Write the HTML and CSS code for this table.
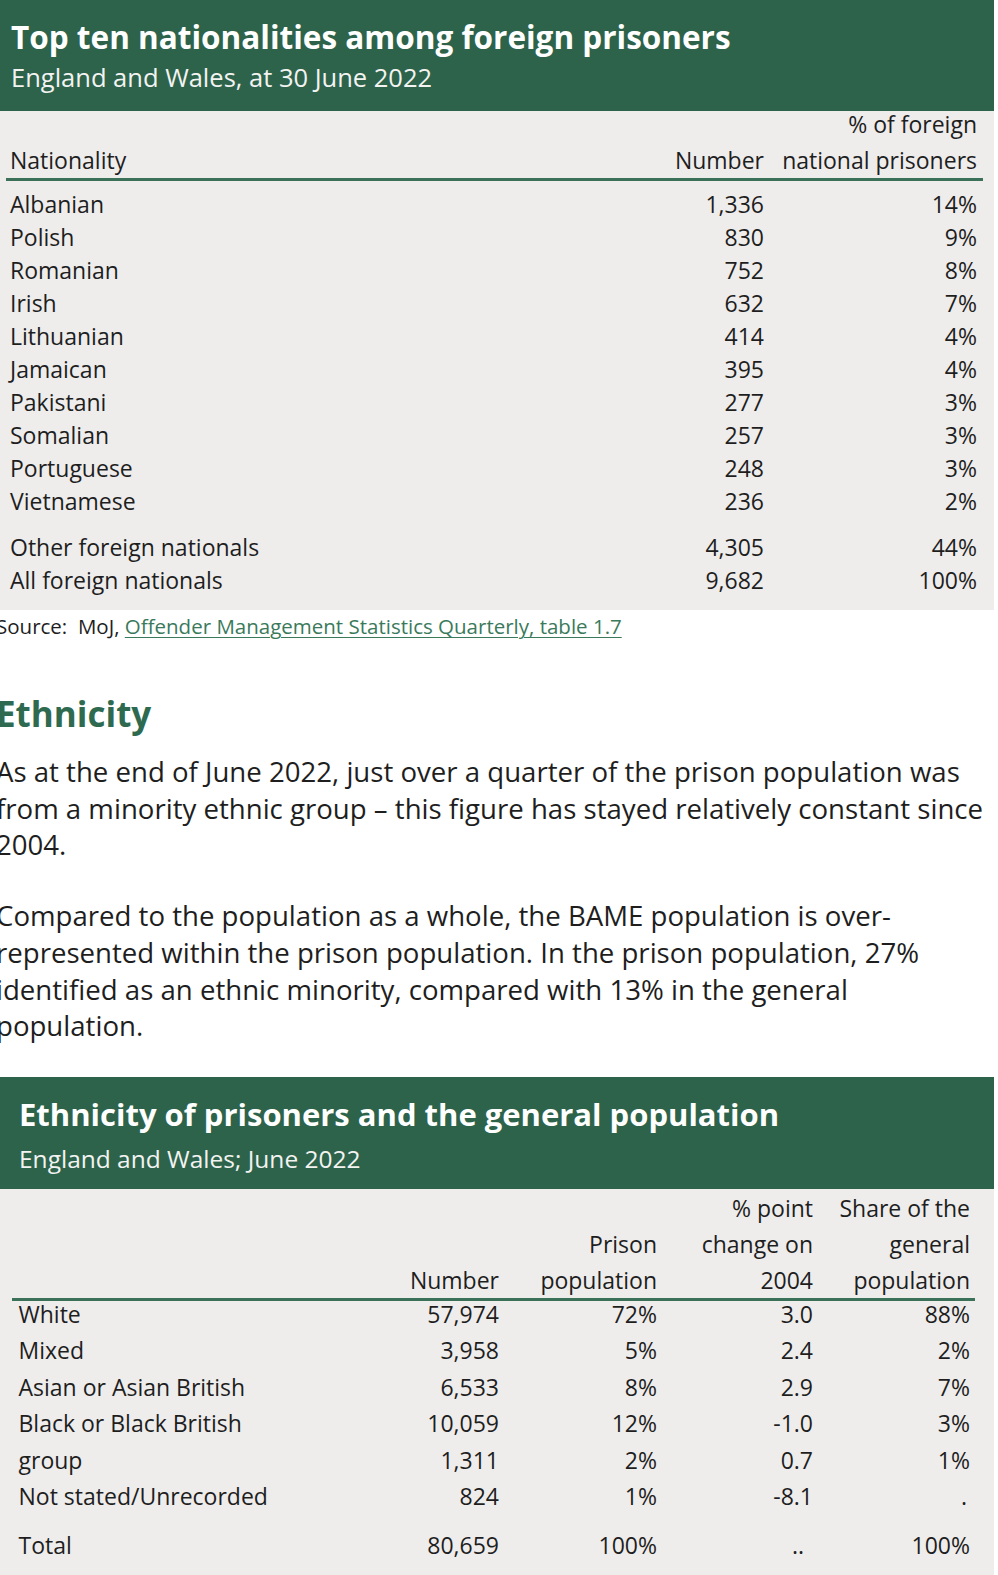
FILE: index.html
```html
<!DOCTYPE html>
<html lang="en">
<head>
<meta charset="utf-8">
<title>Foreign and BAME prisoners</title>
<link rel="stylesheet" href="styles.css">
</head>
<body>
<div class="page">

  <section class="figure figure--nat">
    <header class="fig-head">
      <h2 class="fig-title">Top ten nationalities among foreign prisoners</h2>
      <p class="fig-sub">England and Wales, at 30 June 2022</p>
    </header>
    <div class="fig-body">
      <div class="nat-table">
        <div class="nat-row nat-headrow">
          <span>Nationality</span>
          <span>Number</span>
          <span>% of foreign<br>national prisoners</span>
        </div>
        <div class="nat-group">
          <div class="nat-row"><span>Albanian</span><span>1,336</span><span>14%</span></div>
          <div class="nat-row"><span>Polish</span><span>830</span><span>9%</span></div>
          <div class="nat-row"><span>Romanian</span><span>752</span><span>8%</span></div>
          <div class="nat-row"><span>Irish</span><span>632</span><span>7%</span></div>
          <div class="nat-row"><span>Lithuanian</span><span>414</span><span>4%</span></div>
          <div class="nat-row"><span>Jamaican</span><span>395</span><span>4%</span></div>
          <div class="nat-row"><span>Pakistani</span><span>277</span><span>3%</span></div>
          <div class="nat-row"><span>Somalian</span><span>257</span><span>3%</span></div>
          <div class="nat-row"><span>Portuguese</span><span>248</span><span>3%</span></div>
          <div class="nat-row"><span>Vietnamese</span><span>236</span><span>2%</span></div>
        </div>
        <div class="nat-group nat-group--totals">
          <div class="nat-row"><span>Other foreign nationals</span><span>4,305</span><span>44%</span></div>
          <div class="nat-row"><span>All foreign nationals</span><span>9,682</span><span>100%</span></div>
        </div>
      </div>
    </div>
  </section>

  <p class="source">Source:&nbsp; MoJ, <a class="source-link" href="#">Offender Management Statistics Quarterly, table 1.7</a></p>

  <h2 class="section-h">Ethnicity</h2>
  <p class="para para--first">As at the end of June 2022, just over a quarter of the prison population was from a minority ethnic group – this figure has stayed relatively constant since 2004.</p>
  <p class="para para--next">Compared to the population as a whole, the BAME population is over-represented within the prison population. In the prison population, 27% identified as an ethnic minority, compared with 13% in the general population.</p>

  <section class="figure figure--eth">
    <header class="fig-head">
      <h2 class="fig-title">Ethnicity of prisoners and the general population</h2>
      <p class="fig-sub">England and Wales; June 2022</p>
    </header>
    <div class="fig-body">
      <div class="eth-table">
        <div class="eth-row eth-headrow">
          <span></span>
          <span>Number</span>
          <span>Prison<br>population</span>
          <span>% point<br>change on<br>2004</span>
          <span>Share of the<br>general<br>population</span>
        </div>
        <div class="eth-row"><span>White</span><span>57,974</span><span>72%</span><span>3.0</span><span>88%</span></div>
        <div class="eth-row"><span>Mixed</span><span>3,958</span><span>5%</span><span>2.4</span><span>2%</span></div>
        <div class="eth-row"><span>Asian or Asian British</span><span>6,533</span><span>8%</span><span>2.9</span><span>7%</span></div>
        <div class="eth-row"><span>Black or Black British</span><span>10,059</span><span>12%</span><span>-1.0</span><span>3%</span></div>
        <div class="eth-row"><span>group</span><span>1,311</span><span>2%</span><span>0.7</span><span>1%</span></div>
        <div class="eth-row"><span>Not stated/Unrecorded</span><span>824</span><span>1%</span><span>-8.1</span><span class="nd-one">.</span></div>
        <div class="eth-row eth-row--total"><span>Total</span><span>80,659</span><span>100%</span><span class="nd-two">..</span><span>100%</span></div>
      </div>
    </div>
  </section>

</div>
</body>
</html>
```

FILE: styles.css
```css
body {
  margin: 0;
  background: #ffffff;
  font-family: "Open Sans", "Noto Sans", sans-serif;
  color: #1e1e1e;
}

.page {
  width: 998px;
  overflow: hidden;
}

/* ---------- figure (table card) ---------- */
.figure {
  width: 994px;
}

.fig-head {
  background: #2d634b;
  color: #ffffff;
  padding: 17px 11px 17px;
}

.fig-title {
  margin: 0;
  font-size: 31.5px;
  line-height: 40px;
  font-weight: 700;
  white-space: nowrap;
}

.fig-sub {
  margin: 3px 0 0;
  font-size: 25.5px;
  line-height: 34px;
  font-weight: 400;
  color: #f3f3f1;
  white-space: nowrap;
}

.fig-body {
  background: #eeedec;
  display: flow-root;
}

/* ---------- nationalities table ---------- */
.figure--nat .fig-body {
  padding-bottom: 13px;
}

.nat-table {
  margin: -5px 11px 0 6px;
}

.nat-row {
  display: grid;
  grid-template-columns: 1fr 110px 213px;
  padding: 0 6px 0 4px;
  font-size: 23px;
  line-height: 33px;
  color: #1e1e1e;
  white-space: nowrap;
}

.nat-row > span:not(:first-child) {
  text-align: right;
}

.nat-headrow {
  line-height: 36px;
  align-items: end;
  border-bottom: 3px solid #3b7158;
}

.nat-group {
  padding-top: 7px;
}

.nat-group--totals {
  padding-top: 13px;
}

/* ---------- prose ---------- */
.source {
  margin: 2px 0 0 -4px;
  font-size: 20.5px;
  line-height: 28px;
  color: #1e1e1e;
  white-space: nowrap;
}

.source-link {
  color: #3a7a5b;
  text-decoration: underline;
  text-underline-offset: 3px;
  text-decoration-thickness: 1px;
}

.section-h {
  margin: 52px 0 0 -4px;
  font-size: 35px;
  line-height: 44px;
  font-weight: 700;
  color: #2e6a4f;
}

.para {
  margin: 0 0 0 -4px;
  width: 990px;
  font-size: 27.6px;
  line-height: 36.7px;
  color: #1e1e1e;
}

.para--first {
  margin-top: 17px;
}

.para--next {
  margin-top: 34px;
}

/* ---------- ethnicity table ---------- */
.figure--eth {
  margin-top: 33px;
}

.figure--eth .fig-head {
  padding: 17px 19px 13px;
}

.figure--eth .fig-title {
  font-size: 31px;
}

.figure--eth .fig-sub {
  margin-top: 8px;
  font-size: 24.5px;
}

.figure--eth .fig-body {
  padding: 1px 0 12px;
}

.eth-table {
  margin: 0 19px 0 12px;
}

.eth-row {
  display: grid;
  grid-template-columns: 1fr 120px 158px 156px 157px;
  padding: 0 5px 10.5px 6.5px;
  font-size: 23px;
  line-height: 26px;
  color: #1e1e1e;
  white-space: nowrap;
}

.eth-row > span:not(:first-child) {
  text-align: right;
}

.eth-headrow {
  padding-bottom: 0;
  line-height: 36px;
  align-items: end;
  border-bottom: 3px solid #3b7158;
}

.eth-row--total {
  margin-top: 12px;
}

.nd-one {
  padding-right: 3px;
}

.nd-two {
  padding-right: 9px;
}
```
